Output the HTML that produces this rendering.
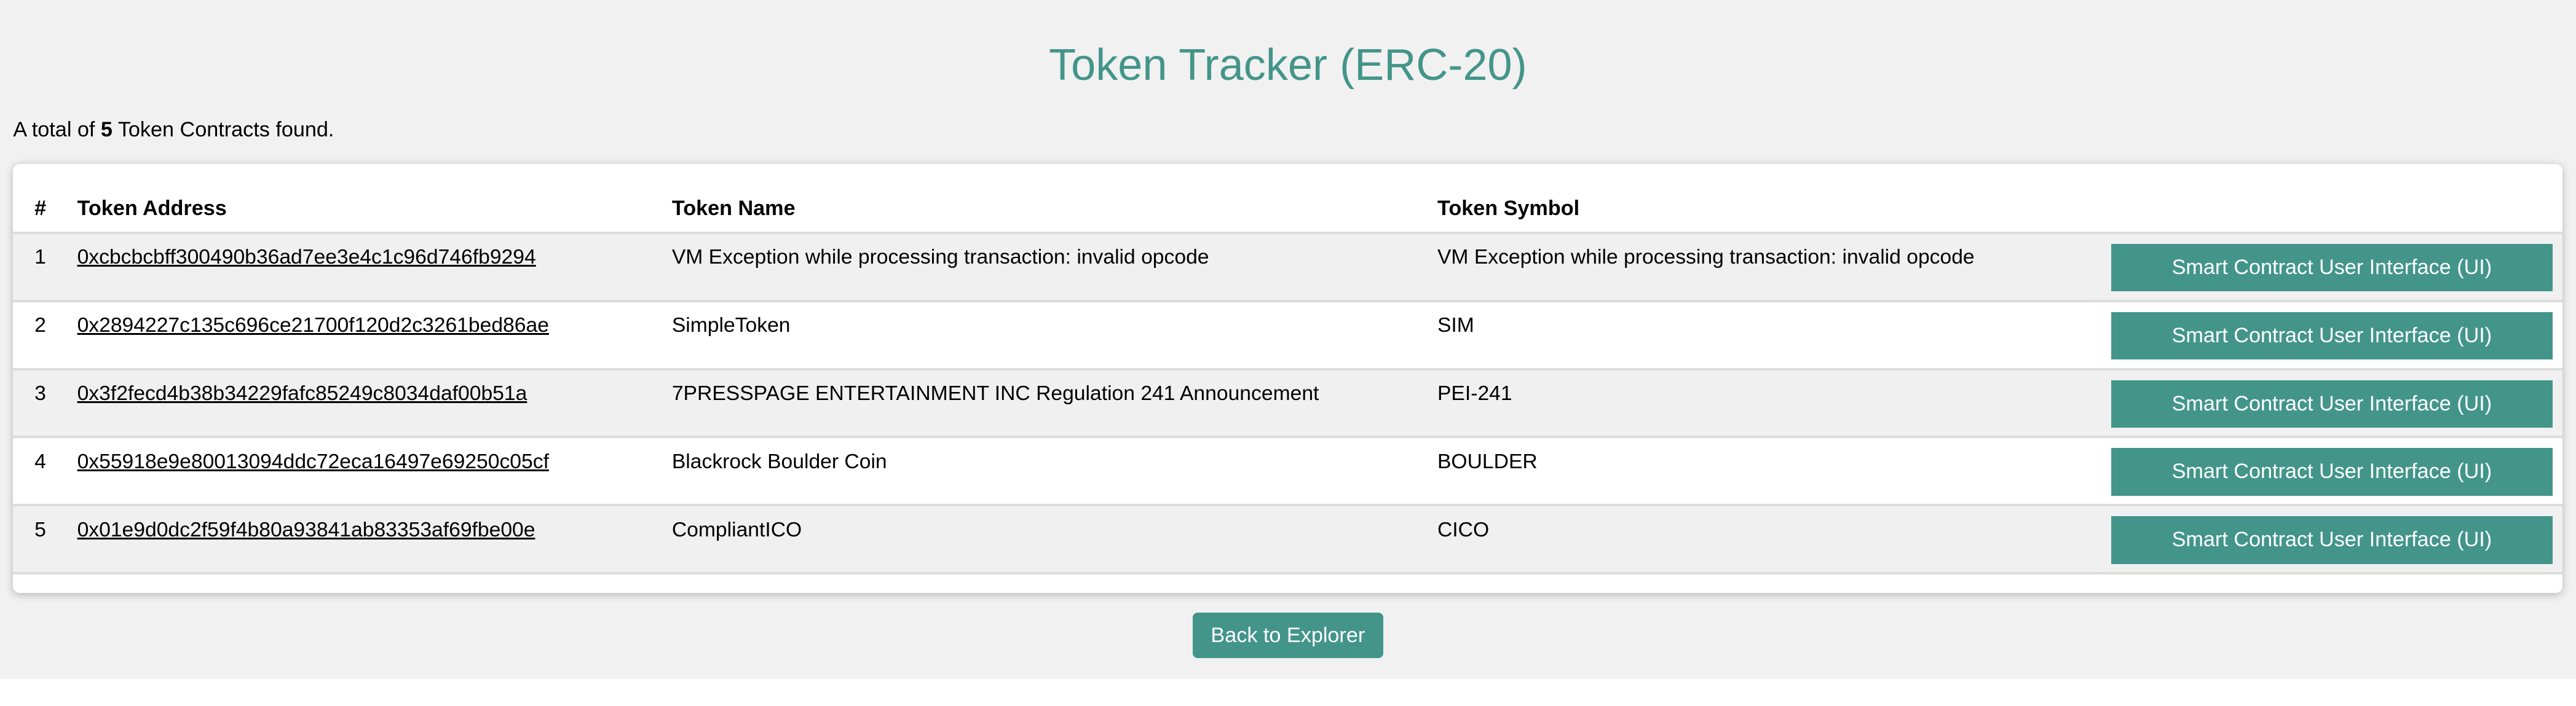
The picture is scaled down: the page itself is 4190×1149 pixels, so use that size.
<!DOCTYPE html>
<html><head><meta charset="utf-8"><style>
html,body{margin:0;padding:0;background:#fff;}
#wrap{zoom:2.672;width:1568px;height:430px;position:relative;font-family:"Liberation Sans",Arial,sans-serif;color:#000;}
#bg{position:absolute;left:0;top:0;width:1568px;height:413.5px;background:#f1f1f1;}
h1{position:absolute;left:0;width:1568px;top:23px;margin:0;text-align:center;font-weight:normal;font-size:27px;line-height:34px;color:#43958a;}
.total{position:absolute;left:8px;top:71px;font-size:12.8px;line-height:16px;}
.card{position:absolute;left:8px;top:100px;width:1552px;height:261px;background:#fff;border-radius:4px;box-shadow:0 1px 5px rgba(0,0,0,.25);overflow:hidden;}
.hdr{position:absolute;top:19px;font-size:12.8px;font-weight:bold;line-height:16px;}
.row{position:absolute;left:0;width:1552px;height:41.5px;border-top:1.5px solid #dcdcdc;box-sizing:border-box;font-size:12.6px;line-height:16px;}
.row.g{background:#f0f0f0;}
.row span{position:absolute;top:6.5px;}
.row a{color:#000;text-decoration:underline;}
.btn{position:absolute;left:1277px;top:6px;width:269px;height:29px;background:#43958a;color:#fff;text-align:center;line-height:29px;font-size:12.8px;}
.back{position:absolute;left:726px;top:373px;width:116px;height:28px;background:#43958a;color:#fff;border-radius:3px;text-align:center;line-height:28px;font-size:12.8px;}
</style></head><body><div id="wrap">
<div id="bg"></div>
<h1>Token Tracker (ERC-20)</h1>
<div class="total">A total of <b>5</b> Token Contracts found.</div>
<div class="card">
<div class="hdr" style="left:13px">#</div>
<div class="hdr" style="left:39px">Token Address</div>
<div class="hdr" style="left:401px">Token Name</div>
<div class="hdr" style="left:867px">Token Symbol</div>
<div class="row g" style="top:41px"><span style="left:13px">1</span><span style="left:39px"><a>0xcbcbcbff300490b36ad7ee3e4c1c96d746fb9294</a></span><span style="left:401px">VM Exception while processing transaction: invalid opcode</span><span style="left:867px">VM Exception while processing transaction: invalid opcode</span><div class="btn">Smart Contract User Interface (UI)</div></div>
<div class="row" style="top:82.5px"><span style="left:13px">2</span><span style="left:39px"><a>0x2894227c135c696ce21700f120d2c3261bed86ae</a></span><span style="left:401px">SimpleToken</span><span style="left:867px">SIM</span><div class="btn">Smart Contract User Interface (UI)</div></div>
<div class="row g" style="top:124px"><span style="left:13px">3</span><span style="left:39px"><a>0x3f2fecd4b38b34229fafc85249c8034daf00b51a</a></span><span style="left:401px">7PRESSPAGE ENTERTAINMENT INC Regulation 241 Announcement</span><span style="left:867px">PEI-241</span><div class="btn">Smart Contract User Interface (UI)</div></div>
<div class="row" style="top:165.5px"><span style="left:13px">4</span><span style="left:39px"><a>0x55918e9e80013094ddc72eca16497e69250c05cf</a></span><span style="left:401px">Blackrock Boulder Coin</span><span style="left:867px">BOULDER</span><div class="btn">Smart Contract User Interface (UI)</div></div>
<div class="row g" style="top:207px;border-bottom:1.5px solid #dcdcdc;height:43px"><span style="left:13px">5</span><span style="left:39px"><a>0x01e9d0dc2f59f4b80a93841ab83353af69fbe00e</a></span><span style="left:401px">CompliantICO</span><span style="left:867px">CICO</span><div class="btn">Smart Contract User Interface (UI)</div></div>
</div>
<div class="back">Back to Explorer</div>
</div></body></html>
